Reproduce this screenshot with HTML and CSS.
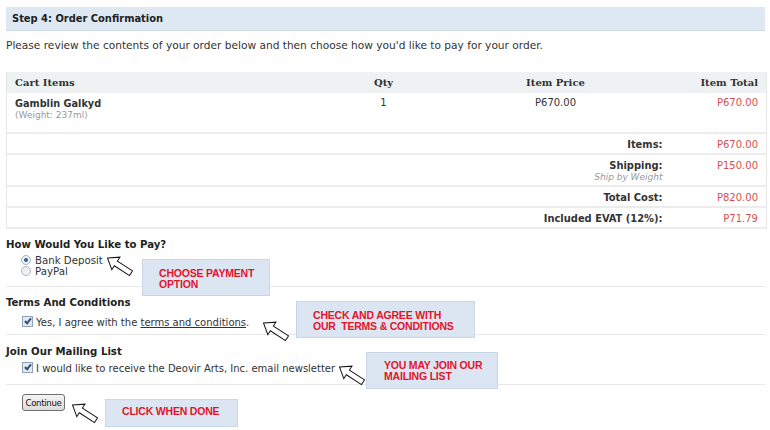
FILE: index.html
```html
<!DOCTYPE html>
<html>
<head>
<meta charset="utf-8">
<link rel="stylesheet" href="styles.css">
</head>
<body>
<div class="page">
  <div class="step-bar">Step 4: Order Confirmation</div>
  <p class="intro">Please review the contents of your order below and then choose how you'd like to pay for your order.</p>

  <table class="cart">
    <colgroup>
      <col class="c1"><col class="c2"><col class="c3"><col class="c4">
    </colgroup>
    <thead>
      <tr class="head">
        <th class="left">Cart Items</th>
        <th class="center">Qty</th>
        <th class="center">Item Price</th>
        <th class="right">Item Total</th>
      </tr>
    </thead>
    <tbody>
      <tr class="item">
        <td class="left"><div class="pname">Gamblin Galkyd</div><div class="pmeta">(Weight: 237ml)</div></td>
        <td class="center">1</td>
        <td class="center">P670.00</td>
        <td class="right red">P670.00</td>
      </tr>
      <tr class="sum">
        <td colspan="3" class="label">Items:</td>
        <td class="right red">P670.00</td>
      </tr>
      <tr class="sum ship">
        <td colspan="3" class="label">Shipping:<div class="note">Ship by Weight</div></td>
        <td class="right red">P150.00</td>
      </tr>
      <tr class="sum">
        <td colspan="3" class="label">Total Cost:</td>
        <td class="right red">P820.00</td>
      </tr>
      <tr class="sum">
        <td colspan="3" class="label">Included EVAT (12%):</td>
        <td class="right red">P71.79</td>
      </tr>
    </tbody>
  </table>

  <div class="section pay">
    <h3>How Would You Like to Pay?</h3>
    <div class="opts">
      <div class="opt"><span class="radio on"></span><span>Bank Deposit</span></div>
      <div class="opt"><span class="radio"></span><span>PayPal</span></div>
    </div>
  </div>

  <div class="section terms">
    <h3>Terms And Conditions</h3>
    <div class="opt chk"><span class="check"></span><span>Yes, I agree with the <u>terms and conditions</u>.</span></div>
  </div>

  <div class="section mail">
    <h3>Join Our Mailing List</h3>
    <div class="opt chk"><span class="check"></span><span>I would like to receive the Deovir Arts, Inc. email newsletter</span></div>
  </div>

  <div class="actions">
    <button class="continue" type="button">Continue</button>
  </div>

  <div class="callout co1">CHOOSE PAYMENT<br>OPTION</div>
  <div class="callout co2">CHECK AND AGREE WITH<br>OUR&nbsp; TERMS &amp; CONDITIONS</div>
  <div class="callout co3">YOU MAY JOIN OUR<br>MAILING LIST</div>
  <div class="callout co4">CLICK WHEN DONE</div>

  <svg class="arrow a1" viewBox="0 0 30 22" width="30" height="22"><g transform="translate(1.5,2) rotate(33)"><polygon points="0,0 10,-7.5 10,-2.8 28,-2.8 28,2.8 10,2.8 10,7.5" fill="#fff" stroke="#111" stroke-width="1"/></g></svg>
  <svg class="arrow a2" viewBox="0 0 30 22" width="30" height="22"><g transform="translate(1.5,2) rotate(33)"><polygon points="0,0 10,-7.5 10,-2.8 28,-2.8 28,2.8 10,2.8 10,7.5" fill="#fff" stroke="#111" stroke-width="1"/></g></svg>
  <svg class="arrow a3" viewBox="0 0 30 22" width="30" height="22"><g transform="translate(1.5,2) rotate(33)"><polygon points="0,0 10,-7.5 10,-2.8 28,-2.8 28,2.8 10,2.8 10,7.5" fill="#fff" stroke="#111" stroke-width="1"/></g></svg>
  <svg class="arrow a4" viewBox="0 0 30 22" width="30" height="22"><g transform="translate(1.5,2) rotate(33)"><polygon points="0,0 10,-7.5 10,-2.8 28,-2.8 28,2.8 10,2.8 10,7.5" fill="#fff" stroke="#111" stroke-width="1"/></g></svg>
</div>
</body>
</html>
```

FILE: styles.css
```css
html, body {
  margin: 0;
  padding: 0;
  background: #fff;
}
body {
  font-family: "DejaVu Sans", Verdana, sans-serif;
  font-size: 10.6px;
  color: #333;
}
.page {
  position: relative;
  width: 770px;
  height: 430px;
  padding: 7px 5px 0 6px;
  box-sizing: border-box;
  overflow: hidden;
}
.step-bar {
  height: 24px;
  line-height: 24px;
  background: #dee8f3;
  border-bottom: 1px solid #d3dde8;
  box-sizing: border-box;
  padding-left: 6px;
  font-family: "DejaVu Sans Condensed", "DejaVu Sans", sans-serif;
  font-weight: bold;
  font-size: 11px;
  color: #222;
}
.intro {
  margin: 7px 0 0 0;
  line-height: 14px;
  color: #333;
}
.cart {
  margin-top: 20px;
  width: 760px;
  border-collapse: collapse;
  border-left: 1px solid #e6e6e6;
  border-right: 1px solid #e6e6e6;
  table-layout: fixed;
  font-size: 10px;
}
.c1 { width: 320px; }
.c2 { width: 114px; }
.c3 { width: 230px; }
.c4 { width: 96px; }
.cart th {
  font-family: "DejaVu Serif", Georgia, serif;
  font-weight: bold;
  font-size: 10px;
  color: #333;
  background: #eef2f2;
  height: 21px;
  padding: 0 8px;
}
.cart td {
  padding: 0 8px;
  vertical-align: top;
}
.left { text-align: left; }
.center { text-align: center; }
.right { text-align: right; }
.red { color: #d65050; }
.item td {
  height: 40px;
  padding-top: 4px;
  box-sizing: border-box;
  border-bottom: 2px solid #ececec;
}
.pname {
  font-family: "DejaVu Sans Condensed", "DejaVu Sans", sans-serif;
  font-weight: bold;
  font-size: 10.8px;
  color: #333;
  line-height: 13px;
}
.pmeta { color: #999; font-size: 9px; line-height: 10px; }
.sum td {
  height: 21px;
  line-height: 13px;
  padding-top: 4px;
  box-sizing: border-box;
  border-bottom: 2px solid #ececec;
}
.sum .label {
  text-align: right;
  font-family: "DejaVu Sans Condensed", "DejaVu Sans", sans-serif;
  font-weight: bold;
  font-size: 11px;
  padding-right: 8px;
}
.ship td { height: 32px; }
.note {
  font-family: "DejaVu Sans", sans-serif;
  font-weight: normal;
  font-style: italic;
  color: #999;
  font-size: 9px;
  line-height: 11px;
}
.section {
  border-bottom: 1px solid #e8e8e8;
}
.section h3 {
  margin: 0;
  font-family: "DejaVu Sans Condensed", "DejaVu Sans", sans-serif;
  font-size: 11.3px;
  line-height: 14px;
  font-weight: bold;
  color: #222;
}
.pay { padding: 9px 0 9px 0; }
.opts { margin-top: 3px; }
.opt {
  padding-left: 15px;
  line-height: 11px;
  font-size: 10.2px;
  color: #333;
}
.radio {
  display: inline-block;
  vertical-align: -1px;
  width: 8px;
  height: 8px;
  border: 1px solid #a8b4c0;
  border-radius: 50%;
  background: #eef1f4;
  margin-right: 4px;
  position: relative;
}
.radio.on::after {
  content: "";
  position: absolute;
  left: 2px;
  top: 2px;
  width: 4px;
  height: 4px;
  border-radius: 50%;
  background: #2f5d8c;
}
.terms { padding: 9px 0 4px 0; }
.mail { padding: 10px 0 8px 0; }
.chk { margin-top: 6px; line-height: 14px; padding-left: 16px; font-size: 10px; }
.mail .chk { margin-top: 3px; }
.check {
  display: inline-block;
  vertical-align: -1px;
  width: 9px;
  height: 9px;
  border: 1px solid #8ea2ba;
  background: #e4e9ef;
  margin-right: 3px;
  position: relative;
}
.check::after {
  content: "";
  position: absolute;
  left: 3px;
  top: 0px;
  width: 2px;
  height: 5px;
  border-right: 2px solid #34507a;
  border-bottom: 2px solid #34507a;
  transform: rotate(40deg);
}
.opt u { text-decoration: underline; }
.actions { padding: 9px 0 0 16px; }
.continue {
  font-family: "DejaVu Sans Condensed", "DejaVu Sans", sans-serif;
  font-size: 9.5px;
  height: 17px;
  width: 43px;
  padding: 0;
  border: 1px solid #707070;
  border-radius: 3px;
  background: linear-gradient(#f4f4f4, #dcdcdc);
  color: #111;
  letter-spacing: -0.3px;
}
.callout {
  position: absolute;
  background: #dce6f2;
  border: 1px solid #c9d6e6;
  box-sizing: border-box;
  font-family: "Liberation Sans", Arial, sans-serif;
  font-weight: bold;
  font-size: 10.5px;
  line-height: 11px;
  color: #e3132b;
  letter-spacing: -0.2px;
}
.co1 { left: 142px; top: 259px; width: 128px; height: 37px; padding: 8px 0 0 16px; }
.co2 { left: 296px; top: 301px; width: 179px; height: 37px; padding: 8px 0 0 16px; }
.co3 { left: 366px; top: 352px; width: 132px; height: 37px; padding: 7px 0 0 17px; }
.co4 { left: 105px; top: 399px; width: 133px; height: 28px; padding: 6px 0 0 16px; }
.arrow { position: absolute; }
.a1 { left: 106px; top: 256px; }
.a2 { left: 262px; top: 321px; }
.a3 { left: 338px; top: 365px; }
.a4 { left: 71px; top: 403px; }
```
